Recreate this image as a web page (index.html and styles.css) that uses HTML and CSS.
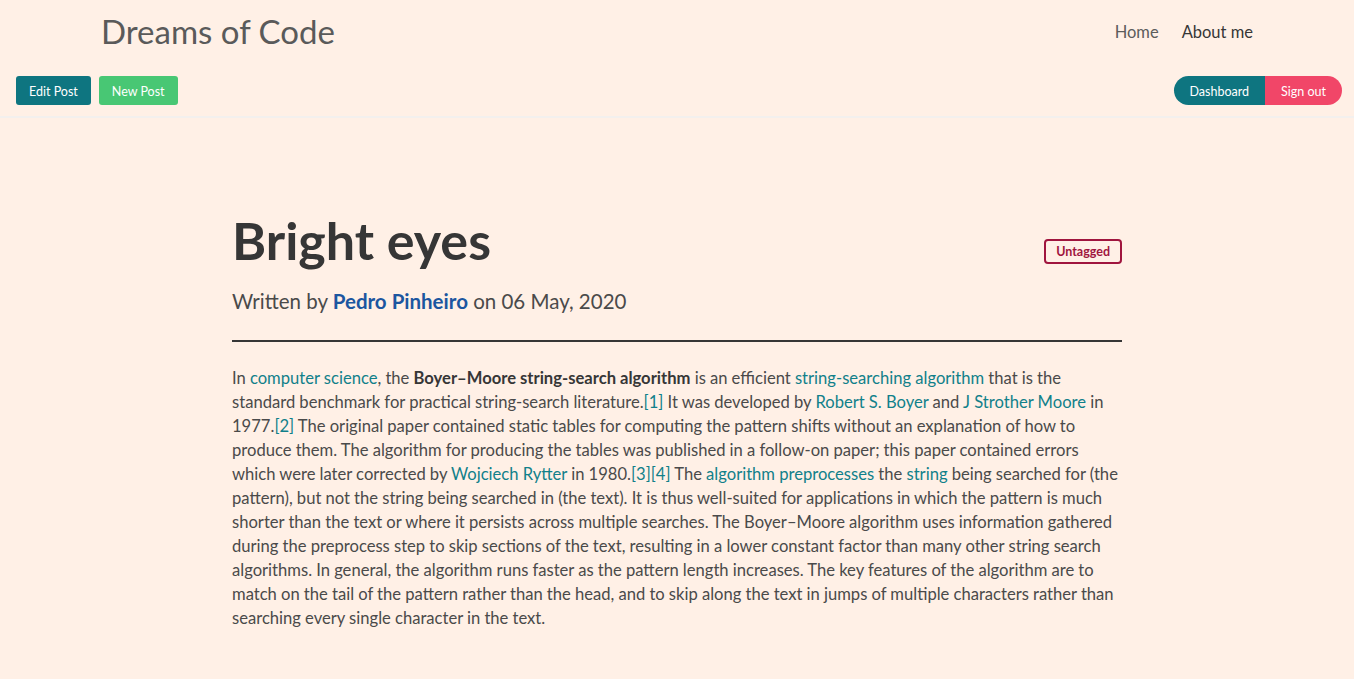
FILE: index.html
```html
<!DOCTYPE html>
<html lang="en">
<head>
    <meta charset="UTF-8">
    <meta name="viewport" content="width=device-width, initial-scale=1.0">
    <title>Bright eyes - Dreams of Code</title>
    <link rel="stylesheet" href="styles.css">
</head>
<body>
    <header class="site-header">
        <nav class="navbar">
            <a class="brand" href="#">Dreams of Code</a>
            <div class="nav-links">
                <a class="nav-item" href="#">Home</a>
                <a class="nav-item active" href="#">About me</a>
            </div>
        </nav>

        <div class="toolbar">
            <div class="post-actions">
                <button class="btn btn-teal">Edit Post</button>
                <button class="btn btn-green">New Post</button>
            </div>
            <div class="pill-group">
                <button class="btn btn-teal">Dashboard</button>
                <button class="btn btn-red">Sign out</button>
            </div>
        </div>
    </header>

    <main class="post">
        <div class="post-head">
            <h1 class="post-title">Bright eyes</h1>
            <span class="tag">Untagged</span>
        </div>
        <p class="post-meta">Written by <a class="author" href="#">Pedro Pinheiro</a> on 06 May, 2020</p>
        <hr class="divider">

        <div class="post-body">
            <p>In <a href="#">computer science</a>, the <strong>Boyer–Moore string-search algorithm</strong> is an efficient <a href="#">string-searching algorithm</a> that is the standard benchmark for practical string-search literature.<a href="#">[1]</a> It was developed by <a href="#">Robert S. Boyer</a> and <a href="#">J Strother Moore</a> in 1977.<a href="#">[2]</a> The original paper contained static tables for computing the pattern shifts without an explanation of how to produce them. The algorithm for producing the tables was published in a follow-on paper; this paper contained errors which were later corrected by <a href="#">Wojciech Rytter</a> in 1980.<a href="#">[3]</a><a href="#">[4]</a> The <a href="#">algorithm preprocesses</a> the <a href="#">string</a> being searched for (the pattern), but not the string being searched in (the text). It is thus well-suited for applications in which the pattern is much shorter than the text or where it persists across multiple searches. The Boyer–Moore algorithm uses information gathered during the preprocess step to skip sections of the text, resulting in a lower constant factor than many other string search algorithms. In general, the algorithm runs faster as the pattern length increases. The key features of the algorithm are to match on the tail of the pattern rather than the head, and to skip along the text in jumps of multiple characters rather than searching every single character in the text.</p>
        </div>
    </main>
</body>
</html>
```

FILE: styles.css
```css
/* Base styles */
* {
    margin: 0;
    padding: 0;
    box-sizing: border-box;
}

body {
    font-family: Lato, 'Liberation Sans', sans-serif;
    color: #4a4a4a;
    background-color: #fff0e6;
    min-height: 100vh;
}

a {
    text-decoration: none;
}

/* Header */
.site-header {
    border-bottom: 2px solid #f3f0ee;
}

.navbar {
    max-width: 1152px;
    margin: 0 auto;
    height: 66px;
    display: flex;
    justify-content: space-between;
    align-items: center;
}

.brand {
    font-size: 33px;
    color: #5a5a5a;
    margin-top: -4px;
}

.nav-links {
    display: flex;
    gap: 23px;
    font-size: 16.5px;
    margin-top: -3px;
}

.nav-item {
    color: #5c5c5c;
}

.nav-item.active {
    color: #363636;
}

.toolbar {
    display: flex;
    justify-content: space-between;
    align-items: center;
    padding: 10px 12px 11px 16px;
}

.post-actions {
    display: flex;
    gap: 8px;
}

/* Buttons */
.btn {
    font-family: inherit;
    font-size: 12.5px;
    height: 29px;
    padding: 1px 13px 0;
    border: none;
    border-radius: 3px;
    color: #fff;
    cursor: pointer;
}

.btn-teal {
    background-color: #0e7580;
}

.btn-green {
    background-color: #48c774;
}

.btn-red {
    background-color: #f14668;
}

.pill-group {
    display: flex;
}

.pill-group .btn {
    border-radius: 0;
    padding: 1px 16px 0;
}

.pill-group .btn:first-child {
    border-radius: 15px 0 0 15px;
}

.pill-group .btn:last-child {
    border-radius: 0 15px 15px 0;
}

/* Post */
.post {
    max-width: 890px;
    margin: 0 auto;
    padding-top: 94px;
}

.post-head {
    display: flex;
    justify-content: space-between;
    align-items: flex-start;
}

.post-title {
    font-size: 52px;
    font-weight: 700;
    color: #363636;
    line-height: 1.1;
}

.tag {
    margin-top: 27px;
    border: 2px solid #a0153e;
    border-radius: 4px;
    color: #a0153e;
    font-size: 12.5px;
    font-weight: 700;
    padding: 3px 10px;
    line-height: 15px;
}

.post-meta {
    margin-top: 18px;
    font-size: 20.5px;
    line-height: 28px;
}

.author {
    color: #1c56a0;
    font-weight: 700;
}

.divider {
    border: none;
    border-top: 2px solid #363636;
    margin-top: 25px;
}

.post-body {
    margin-top: 24px;
    font-size: 16.6px;
    word-spacing: -0.1px;
    line-height: 24px;
}

.post-body a {
    color: #11808a;
}

.post-body strong {
    color: #363636;
}
```
